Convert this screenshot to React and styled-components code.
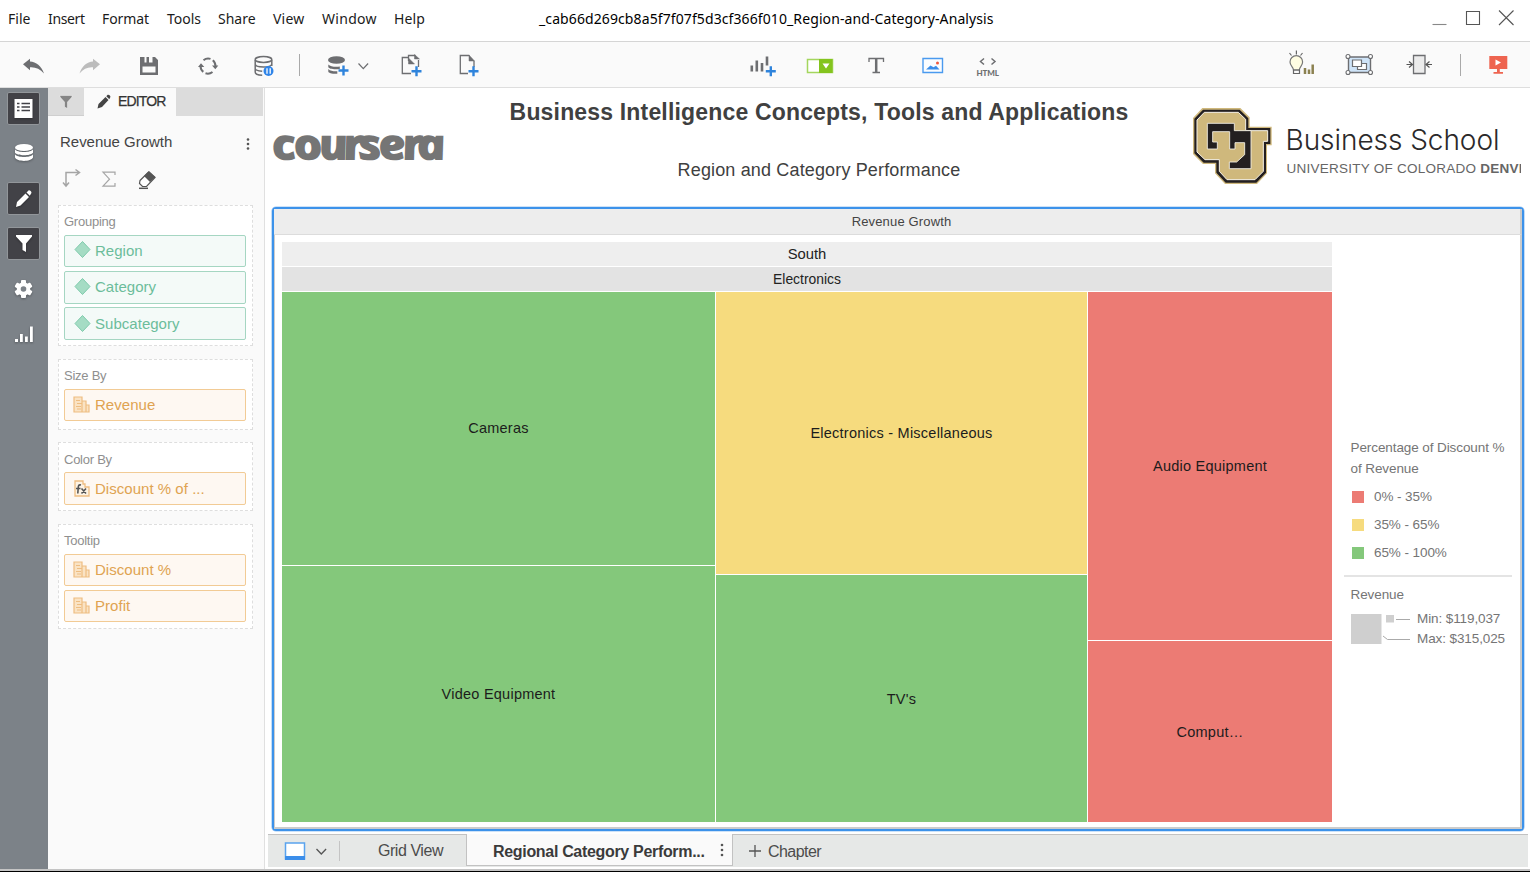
import React from "react";
import styled, { createGlobalStyle } from "styled-components";

const Global = createGlobalStyle`
  * { box-sizing: border-box; }
  body { margin: 0; background: #fff; overflow: hidden; font-family: "Liberation Sans", Arial, sans-serif; }
  svg { display: block; flex: none; }
`;

const Window = styled.div`
  width: 1530px; height: 872px; display: flex; flex-direction: column; overflow: hidden; background: #fff;
`;

/* ---- menu bar ---- */
const MenuBar = styled.header`
  flex: none; height: 42px; display: flex; align-items: flex-start; border-bottom: 1px solid #d5d5d5;
  font: 14px/20px "Noto Sans", "Open Sans", sans-serif; color: #1b1b1b;
`;
const MenuItem = styled.span`
  flex: none; width: ${(p) => p.$w}px; padding-top: 9px; white-space: nowrap; letter-spacing: ${(p) => p.$ls || 0}px;
`;
const DocTitle = styled.span`
  flex: none; width: 893px; padding-top: 9px; letter-spacing: 0.1px; color: #000; white-space: nowrap;
`;

/* ---- toolbar ---- */
const Toolbar = styled.div`
  flex: none; height: 45px; display: flex; background: #fafafa; box-shadow: 0 1px #dedede; padding-left: 4px; position: relative;
`;
const ToolGroup = styled.div`display: flex; margin-left: ${(p) => p.$gap || 0}px;`;
const Divider = styled.i`
  flex: none; width: 1px; height: 22px; background: #a9a9a9; margin: 12px ${(p) => p.$r}px 0 ${(p) => p.$l}px;
`;
const Tool = ({ x, w = 58, children }) => (
  <svg width={w} height="45" viewBox={`${x} 42 ${w} 45`} fill="none" stroke="#6d6e71" strokeWidth="1.5">{children}</svg>
);
const Plus = ({ x, y }) => <path d={`M${x - 5} ${y}h10M${x} ${y - 5}v10`} stroke="#2f84dc" strokeWidth="2.4" />;

/* ---- body ---- */
const Body = styled.div`flex: none; height: 783px; display: flex;`;
const Rail = styled.nav`
  flex: none; width: 48px; background: #7c8288; padding: 5px 0 0 7px; display: flex; flex-direction: column; gap: 12px;
`;
const RailButton = styled.div`
  width: 33px; height: 33px; border-radius: 2px; border: 1px solid ${(p) => (p.$on ? "#92969a" : "transparent")};
  background: ${(p) => (p.$on ? "#424247" : "transparent")};
  svg { margin: -1.5px; filter: drop-shadow(0 1.5px 1px rgba(0,0,0,.3)); }
`;
const RailIcon = ({ on, children }) => (
  <RailButton $on={on}><svg width="34" height="34" viewBox="0 0 34 34" fill="#fff">{children}</svg></RailButton>
);

const Editor = styled.aside`
  flex: none; width: 217px; background: #fafafa; border-right: 1px solid #e0e0e0; padding-right: 1px;
`;
const EditorTabs = styled.div`display: flex; height: 29px; background: #dcdcdc;`;
const FilterTab = styled.div`width: 36px; border-bottom: 1px solid #cfcfcf;`;
const EditorTab = styled.div`
  width: 92px; background: #fafafa; display: flex; font-size: 14px; line-height: 28px; color: #333; -webkit-text-stroke: .25px #333;
  span { letter-spacing: -0.85px; padding-left: 1px; }
`;
const EditorTitle = styled.div`
  display: flex; justify-content: space-between; height: 51px; padding: 16px 13px 0 12px; font-size: 15px; line-height: 20px; color: #444; letter-spacing: -.02px;
`;
const EditorTools = styled.div`height: 38px;`;
const Section = styled.section`
  width: 195px; height: ${(p) => p.$h}px; margin: 0 0 ${(p) => p.$mb}px 10px; padding: 0 6px 0 5px;
  border: 1px dashed #dedede; background: #fff; display: flex; flex-direction: column; gap: 4px;
  h4 { margin: 0; flex: none; height: ${(p) => p.$head}px; margin-bottom: -4px; padding-top: ${(p) => p.$top || 8}px;
    font: 13px/16px "Liberation Sans", Arial, sans-serif; color: #8f8f8f; letter-spacing: -.25px; }
`;
const Pill = styled.div`
  flex: none; height: ${(p) => p.$h || 32}px; width: 182px; border-radius: 2px; display: flex; align-items: center; font-size: 15px;
  border: 1px solid ${(p) => (p.$green ? "#a5d6c2" : "#f2cb95")};
  background: ${(p) => (p.$green ? "#f4faf8" : "#fef8f2")};
  color: ${(p) => (p.$green ? "#6cbd9b" : "#e0a351")};
  letter-spacing: .03px; padding: 0 0 ${(p) => (p.$pb ?? 2)}px 8px; gap: 4px;
`;
const Diamond = () => (
  <svg width="18" height="20" viewBox="0 0 18 20"><path d="M9.5 1.5 17 9.5 9.5 17.5 2 9.5Z" fill="#a5dcc4" stroke="#7fcbac" /></svg>
);
const Building = () => (
  <svg width="18" height="20" viewBox="0 -1 18 20" fill="#fae3c4" stroke="#eebd81" strokeWidth="1.2">
    <path d="M1 2h8v15H1ZM9 6h4v11H9ZM13 10h3v7h-3Z" /><path d="M3 5.5h4M4 8.5h5M3 11.5h5M4 14h4" />
  </svg>
);
const Formula = () => (
  <svg width="18" height="20" viewBox="0 0 18 20" fill="#fdf3e4" stroke="#eebd81" strokeWidth="1.3">
    <path d="M2 2h8v3h2v3h4v9H2Z" />
    <path d="M8 6C5.5 5.3 5.3 7 5.2 9L4.8 14.5M3 9.5h4.5M8.5 9.5l4.5 5M13 9.5l-4.5 5" fill="none" stroke="#555" strokeWidth="1.6" />
  </svg>
);

/* ---- dashboard ---- */
const Main = styled.main`flex: none; width: 1265px; display: flex; flex-direction: column; padding-left: 3px;`;
const Heading = styled.div`flex: none; height: 120px; display: flex;`;
const Coursera = styled.div`flex: none; width: 205px; padding: 36.5px 0 0 5px; svg { overflow: visible; }`;
const Titles = styled.div`
  width: 692px; text-align: center; color: #404040; display: flex; flex-direction: column; align-items: center;
  h1 { margin: 12px 0 0; font-size: 23px; line-height: 26px; letter-spacing: .17px; white-space: nowrap; }
  p { margin: 35px 0 0; font-size: 18px; line-height: 20px; letter-spacing: .15px; }
`;
const School = styled.div`width: 356px; display: flex; padding: 19.500px 0 0 26.500px; overflow: hidden;`;
const SchoolName = styled.div`
  width: 236px; overflow: hidden; margin-left: 13px; padding-top: 15px; white-space: nowrap; color: #2b292a;
  div { font: 28px/37px Inter, "Liberation Sans", sans-serif; font-weight: 300; letter-spacing: -.05px; }
  p { margin: 0; font-size: 13.5px; line-height: 20px; color: #666; letter-spacing: .25px; padding-left: 1px; }
`;
const Panel = styled.section`
  flex: none; width: 1252px; height: 624px; margin-left: 4px; border: 2px solid #3c92ea; border-radius: 4px;
  box-shadow: 0 0 0 .6px #9cc6f2; display: flex; flex-direction: column;
`;
const PanelHead = styled.div`
  flex: none; height: 26px; background: #ededed; border-bottom: 1px solid #dcdcdc; border-right: 2px solid #ccc;
  text-align: center; font-size: 13px; line-height: 25px; color: #444; letter-spacing: .15px; padding-left: 9px;
`;
const PanelBody = styled.div`
  flex: 1; border: solid #ccc; border-width: 0 2px 2px 1px; display: flex; padding: 7px 0 5px 7px;
`;
const Treemap = styled.div`width: 1050px; display: flex; flex-direction: column; gap: 1px;`;
const Band = styled.div`
  flex: none; height: 24px; background: ${(p) => p.$bg}; text-align: center; font-size: ${(p) => p.$fs}px; line-height: 24px; color: #222;
`;
const Columns = styled.div`flex: 1; display: flex; gap: 1px;`;
const Column = styled.div`width: ${(p) => p.$w}px; display: flex; flex-direction: column; gap: 1px;`;
const tones = { red: "#ec7b74", yellow: "#f6db7e", green: "#84c87b" };
const Tile = styled.div`
  height: ${(p) => p.$h}px; background: ${(p) => tones[p.$tone]}; display: flex; align-items: center; justify-content: center;
  font-size: 14.5px; color: #1c1c1c; letter-spacing: .24px; padding: 0 0 ${(p) => p.$lift || 0}px 0;
`;
const Legend = styled.div`
  width: 168px; margin: 195px 0 0 12px; color: #757575; font-size: 13.5px; line-height: 21px;
  p { margin: 0; padding-left: 6.500px; letter-spacing: -.09px; white-space: nowrap; }
`;
const Key = styled.div`
  display: flex; align-items: center; height: 28px; padding-left: 8px; gap: 10px; letter-spacing: -.08px;
  i { width: 12px; height: 12px; background: ${(p) => tones[p.$tone]}; margin-top: 1px; }
`;
const LegendRule = styled.div`height: 2px; background: #e4e4e4; margin: 9px 0 7px;`;
const SizeKey = styled.div`
  display: flex; padding-left: 7px; margin-top: 3px; line-height: 20px; gap: 6px; white-space: nowrap; letter-spacing: -.1px;
  div { padding-top: 1px; }
`;

/* ---- chapter tabs ---- */
const Tabs = styled.footer`
  flex: none; width: 1260px; height: 33px; margin-top: 3px; background: #e6e8e7; border-top: 1px solid #c2c2c2; display: flex;
  font-size: 16px; line-height: 34px; color: #4c4c4c; white-space: nowrap;
`;
const GridTab = styled.div`width: 126px; padding-left: 38px; line-height: 32px; letter-spacing: -.45px;`;
const ActiveTab = styled.div`
  width: 267px; height: 32px; margin-top: -1px; background: #fafafa; border: 1px solid #c2c2c2; border-top: 0; display: flex; justify-content: space-between;
  padding: 0 8px 0 26px; font-weight: bold; line-height: 35px; color: #3b3b3b; letter-spacing: -.32px;
`;
const NewTab = styled.div`display: flex; gap: 7px; padding-left: 16px; letter-spacing: -.55px;`;
const BottomEdge = styled.div`flex: none; height: 3px; border-top: 1px solid #c4c4c4; border-bottom: 1px solid #000; background: #c4c4c4; margin-top: -1px;`;

const Dots = ({ h = 20, y = 10, s = 4.5 }) => (
  <svg width="4" height={h} viewBox={`0 0 4 ${h}`} fill="#555">
    {[-s, 0, s].map((d) => <circle key={d} cx="2" cy={y + d} r="1.3" />)}
  </svg>
);

const silhouette = "M68 70H182L210 98V126H276V182H262V266L232 298H136L106 266V238H70L40 208V100Z";
const CUMark = () => (
  <svg width="81" height="79" viewBox="37 67 243 237" strokeLinejoin="miter">
    <path d={silhouette} fill="#cfb87c" />
    <path d="M70 75H180L206 101V130H272V178H259V264L230 294H138L110 264V234H72L44 206V102Z" fill="#231f20" />
    <path d="M74 83H176L198 104V138H264V170H251V260L226 285H142L119 260V225H76L52 202V106Z" fill="#cfb87c" stroke="#f6f2e8" strokeWidth="3" />
    <path d="M83 116H164V138H214V252H149V232H171L195 210V174H166V193H150V141H99V172H113V193H83Z" fill="#231f20" stroke="#f6f2e8" strokeWidth="2.600" />
  </svg>
);

export default function App() {
  return (
    <Window>
      <Global />
      <MenuBar>
        <MenuItem $w={8} />
        <MenuItem $w={40} $ls={0}>File</MenuItem>
        <MenuItem $w={54} $ls={-0.35}>Insert</MenuItem>
        <MenuItem $w={65} $ls={-0.1}>Format</MenuItem>
        <MenuItem $w={51} $ls={0}>Tools</MenuItem>
        <MenuItem $w={55} $ls={0}>Share</MenuItem>
        <MenuItem $w={49} $ls={0.2}>View</MenuItem>
        <MenuItem $w={72} $ls={0.3}>Window</MenuItem>
        <MenuItem $w={145} $ls={0.15}>Help</MenuItem>
        <DocTitle>_cab66d269cb8a5f7f07f5d3cf366f010_Region-and-Category-Analysis</DocTitle>
        <svg width="90" height="41" viewBox="1432 0 90 41" fill="none" stroke="#555" strokeWidth="1.1">
          <path d="M1432.5 24.5h14" stroke="#888" /><path d="M1466.5 11.5h13v13h-13Z" /><path d="m1499 10.5 14.5 14.5m0-14.5L1499 25" />
        </svg>
      </MenuBar>

      <Toolbar>
        <ToolGroup>
          <Tool x={4}><path stroke="none" fill="#6d6e71" d="M23 64.2 30 58.8v2.8c6 .3 11.5 4.500 14 11.900-4-4.600-8.500-6.600-14-6.200v2.900Z" /></Tool>
          <Tool x={62}><path stroke="none" fill="#bcbcbc" d="M100 64.200 93 58.800v2.800c-6 .3-11 4.500-13.500 11.900 4-4.600 8-6.600 13.500-6.200v2.900Z" /></Tool>
          <Tool x={120}><path stroke="none" fill="#6d6e71" fillRule="evenodd" d="M140 57h15l3 3v15h-18ZM142.500 66.500v6h13v-6ZM144.500 57v5.500h2V57ZM149 57v5.500h3.500V57Z" /></Tool>
          <Tool x={178}>
            <path d="M203.500 60.200a7.500 7.500 0 0 1 7-1.300M212.800 60.200a7.500 7.500 0 0 1 2.700 5.800M212.500 72a7.500 7.500 0 0 1-7 1.300M203.300 71.900a7.500 7.500 0 0 1-2.800-5.900" strokeWidth="2" />
            <path d="M198 67 201 63.200 204.300 67ZM212 65.500h6.300L215.300 69.200Z" fill="#6d6e71" stroke="none" />
          </Tool>
          <Tool x={236}>
            <ellipse cx="263.500" cy="59.500" rx="8.300" ry="2.900" />
            <path d="M255.200 60v12c0 2 3 3.200 7 3.300M271.800 60v6M255.200 64c0 2 4 3 8.300 3s8-1 8.300-3M255.200 68.500c0 1.700 3 2.500 7 2.800" />
            <circle cx="268.500" cy="71" r="5" fill="#2f84e8" stroke="none" /><path d="M267 68.300v5.500M270.200 68.300v5.500" stroke="#fff" strokeWidth="1.300" />
          </Tool>
        </ToolGroup>
        <Divider $l={5} $r={16} />
        <Tool x={316} w={40}>
          <g fill="#6d6e71" stroke="none"><ellipse cx="336.500" cy="60" rx="8.500" ry="3.800" />
            <path d="M328.300 64.500c2 2.500 8 2.500 11.500 2v2.500c-6 .8-11-.2-11.500-2ZM328.300 69c2 2.300 6 2.300 9 2.200v2.600c-5 .2-9-.8-9-2.300Z" /></g>
          <Plus x={343.500} y={70.500} />
        </Tool>
        <Tool x={356} w={26}><path d="m358.500 63.500 4.800 5.200 4.800-5.200" strokeWidth="1.200" /></Tool>
        <Tool x={382}>
          <path d="M411 73.500h-8.700V57.500h6.500M408.500 61V55.500h7M418.500 60v7" strokeWidth="1.300" />
          <path d="M414.500 54.500v4.500h5ZM408.500 58v6h6Z" fill="#6d6e71" stroke="#6d6e71" strokeWidth=".5" /><Plus x={416.500} y={71.300} />
        </Tool>
        <Tool x={440}>
          <path d="M468 73.500h-7.700v-18h9M474 61v6" strokeWidth="1.300" />
          <path d="M469 55v6h5.500Z" fill="#6d6e71" strokeWidth=".5" /><Plus x={473.500} y={71.300} />
        </Tool>
        <ToolGroup $gap={235}>
          <Tool x={733}>
            <path d="M751.800 65.500v6M756.800 60.500v11M762 63v8.500M767 56.500v9" strokeWidth="2.600" /><Plus x={770.800} y={71.300} />
          </Tool>
          <Tool x={791}>
            <path d="M807.500 59.500h25v13h-25Z" fill="#fff" stroke="#a4d65e" /><path d="M819 59h13.500v14H819Z" fill="#84c41e" stroke="none" />
            <path d="M822.500 63.500h7l-3.500 5Z" fill="#fff" stroke="none" />
          </Tool>
          <Tool x={849} w={56}><path d="M869 62v-3.500h14.500V62M872.500 72.500h7.500" strokeWidth="1.300" /><path d="M876.200 58v14" strokeWidth="2.500" /></Tool>
          <Tool x={905} w={56}>
            <path d="M923 58.500h19.500v14H923Z" stroke="#4a9aef" strokeWidth="1.400" fill="#fbfdff" />
            <path d="m926 69.500 4.500-4 3 1.800 2.500-1.500 3.500 3.700Z" fill="#3b8eea" stroke="none" /><circle cx="937.500" cy="63" r="1.500" fill="#f05a40" stroke="none" />
          </Tool>
          <Tool x={961}>
            <path d="m984 58.500-3.500 3 3.500 3M991.500 58.500l3.500 3-3.500 3" strokeWidth="1.500" />
            <text x="976.500" y="75.500" textLength="22.500" fontFamily="Lato, sans-serif" fontSize="8" fontWeight="900" fill="#6d6e71" stroke="none">HTML</text>
          </Tool>
        </ToolGroup>
        <ToolGroup $gap={253}>
          <Tool x={1272}>
            <path d="M1293.500 70c0-3-3.500-4-3.500-8a6.300 6.300 0 0 1 12.600 0c0 4-3.300 5-3.300 8Z" fill="#fffde2" stroke="#777" strokeWidth="1.200" />
            <path d="M1293.500 70h6v3.500h-6ZM1296.400 50.500v4M1289.500 53l2 2.500M1302.500 53l-2 2.500" stroke="#666" strokeWidth="1.200" />
            <path d="M1305 68v6M1309 69.500v4.500M1312.700 64.500v9.500" stroke="#8b8150" strokeWidth="2.500" />
          </Tool>
          <Tool x={1330} w={60}>
            <path d="M1348.500 57h22v15.500h-22Z" fill="#cfe4f8" strokeWidth="1.400" />
            <path d="M1357.500 63.500h9v6h-9Z" fill="#fff" strokeWidth="1.200" />
            <path d="M1352.500 60h9v6.500h-9Z" fill="#fff" strokeWidth="1.200" />
            {[[1348, 56.500], [1370.500, 56.500], [1348, 72.500], [1370.500, 72.500]].map(([a, b]) => <circle key={`${a}${b}`} cx={a} cy={b} r="2" fill="#fff" strokeWidth="1.100" />)}
          </Tool>
          <Tool x={1390}>
            <path d="M1413.500 55.500h11.500v18h-11.500Z" fill="#ececec" strokeWidth="1.300" />
            <path d="M1406.500 64.500h6M1409 61.500l3.500 3-3.500 3M1432 64.500h-6M1429.500 61.500l-3.500 3 3.500 3" stroke="#555" strokeWidth="1.200" />
          </Tool>
        </ToolGroup>
        <Divider $l={12} $r={8} />
        <Tool x={1469}>
          <path d="M1489.300 56h18v13h-18ZM1497 69h2.800v3h3.200v1.800h-9.500V72h3.500Z" fill="#ee6450" stroke="none" />
          <path d="m1495.500 59.500 5.500 3-5.500 3Z" fill="#fff" stroke="none" />
        </Tool>
      </Toolbar>

      <Body>
        <Rail>
          <RailIcon on>
            <path d="M7.500 7h18v19h-18Z" />
            <path d="M10 11.500h2.500M10 15h2.500M10 18.500h2.500M14.500 11.500h8.500M14.500 15h8.500M14.500 18.500h8.500" stroke="#424247" strokeWidth="1.300" />
          </RailIcon>
          <RailIcon>
            <ellipse cx="17" cy="10.500" rx="9" ry="3.600" />
            <path d="M8 12.300c2 3.700 16 3.700 18 0v3.500c-2 3.300-16 3.300-18 0ZM8 17.300c2 3.700 16 3.700 18 0v3.300c-2 4.500-16 4.500-18 0Z" />
          </RailIcon>
          <RailIcon on><path d="M9 25 10 20 18.500 11.500 22 15 13.500 23.500ZM19.500 10.500 21.500 8.500c1-1 3.700 1.500 2.800 2.700L22.800 13.800Z" /></RailIcon>
          <RailIcon on><path d="M9 8h16v1.500L19 16.500V25l-3.500-2V16.500L9 9.500Z" /></RailIcon>
          <RailIcon>
            <g transform="translate(16.500 17)">
              {[0, 60, 120].map((a) => <rect key={a} x="-2.500" y="-9" width="5" height="18" rx="1" transform={`rotate(${a})`} />)}
              <circle r="6.800" /><circle r="2.800" fill="#7c8288" />
            </g>
          </RailIcon>
          <RailIcon><path d="M8 22h3v3H8ZM13 17h2.800v8H13ZM18 19.500h2.800V25H18ZM23 9.500h2.800V25H23Z" /></RailIcon>
        </Rail>

        <Editor>
          <EditorTabs>
            <FilterTab><svg width="36" height="28" viewBox="0 0 36 28"><path d="M12 8.500h12v1.500l-4.500 5v6.500l-3-1.500V15L12 10Z" fill="#858585" stroke="#f2f2f2" strokeWidth=".5" /></svg></FilterTab>
            <EditorTab>
              <svg width="33" height="28" viewBox="0 0 33 28" fill="#444"><path d="M13.500 21.500 14.500 17 21.500 10 24.500 13 18 20ZM22.300 9.200 23.700 7.800c1-.7 3.200 1.200 2.700 2.300L25.300 12.200Z" /></svg>
              <span>EDITOR</span>
            </EditorTab>
          </EditorTabs>
          <EditorTitle><span>Revenue Growth</span><Dots h={22} y={12} /></EditorTitle>
          <EditorTools>
            <svg width="120" height="30" viewBox="48 167 120 30" fill="none" stroke="#a5a5a5" strokeWidth="1.500">
              <path d="M66 185v-12.500h13M75.500 169.500l4 3-4 3M63 182.500l3 3.500 3-3.500" />
              <path d="M115 175v-2.800h-12l6.500 7-6.500 7h12V183" strokeWidth="1.200" />
              <path d="m140 180.500 8.500-8.500 6.500 5.500-8.500 9h-4l-3-3Z" fill="#fff" stroke="#555" strokeWidth="1.200" /><path d="m144 176 5-5 6.500 6-5.500 5Z" fill="#555" stroke="none" /><path d="M139 188.300h9" stroke="#555" />
            </svg>
          </EditorTools>
          <Section $h={141} $mb={13} $head={29}>
            <h4>Grouping</h4>
            <Pill $green><Diamond />Region</Pill>
            <Pill $green $h={33}><Diamond />Category</Pill>
            <Pill $green $h={33} $pb={0} style={{ marginTop: -1 }}><Diamond />Subcategory</Pill>
          </Section>
          <Section $h={71} $mb={12} $head={29}>
            <h4>Size By</h4><Pill><Building />Revenue</Pill>
          </Section>
          <Section $h={69} $mb={13} $head={29} $top={9}>
            <h4>Color By</h4><Pill $h={33} $pb={0}><Formula />Discount % of ...</Pill>
          </Section>
          <Section $h={105} $mb={0} $head={29}>
            <h4>Tooltip</h4><Pill><Building />Discount %</Pill><Pill><Building />Profit</Pill>
          </Section>
        </Editor>

        <Main>
          <Heading>
            <Coursera>
              <svg width="190" height="60" viewBox="0 0 190 60">
                <text transform="translate(1.500 34.500) skewX(12) scale(1.160 1)" x="0 19 40.500 61.500 74.500 92 112.500 125" fontFamily="'Open Sans', sans-serif" fontWeight="700" fontStyle="italic" fontSize="41" fill="#757575" stroke="#757575" strokeWidth="1.900">coursera</text>
              </svg>
            </Coursera>
            <Titles>
              <h1>Business Intelligence Concepts, Tools and Applications</h1>
              <p>Region and Category Performance</p>
            </Titles>
            <School>
              <CUMark />
              <SchoolName>
                <div>Business School</div>
                <p>UNIVERSITY OF COLORADO <b>DENVER</b></p>
              </SchoolName>
            </School>
          </Heading>
          <Panel>
            <PanelHead>Revenue Growth</PanelHead>
            <PanelBody>
              <Treemap>
                <Band $bg="#eeeeee" $fs={14.800}>South</Band>
                <Band $bg="#e3e3e3" $fs={13.900}>Electronics</Band>
                <Columns>
                  <Column $w={433}>
                    <Tile $tone="green" $h={273} $lift={2}>Cameras</Tile>
                    <Tile $tone="green" $h={256}>Video Equipment</Tile>
                  </Column>
                  <Column $w={371}>
                    <Tile $tone="yellow" $h={282}>Electronics - Miscellaneous</Tile>
                    <Tile $tone="green" $h={247}>TV's</Tile>
                  </Column>
                  <Column $w={244}>
                    <Tile $tone="red" $h={348}>Audio Equipment</Tile>
                    <Tile $tone="red" $h={181}>Comput…</Tile>
                  </Column>
                </Columns>
              </Treemap>
              <Legend>
                <p>Percentage of Discount %</p>
                <p>of Revenue</p>
                <Key $tone="red" style={{ marginTop: 3 }}><i />0% - 35%</Key>
                <Key $tone="yellow"><i />35% - 65%</Key>
                <Key $tone="green"><i />65% - 100%</Key>
                <LegendRule />
                <p>Revenue</p>
                <SizeKey>
                  <svg width="60" height="40" viewBox="1351 608 60 40"><path d="M1351 614h30.500v30H1351ZM1386 615h8v7.500h-8Z" fill="#cfcfcf" /><path d="M1396 619.500h14M1383 636l4.500 3.500H1410" stroke="#aaa" fill="none" /></svg>
                  <div>Min: $119,037<br />Max: $315,025</div>
                </SizeKey>
              </Legend>
            </PanelBody>
          </Panel>
          <Tabs>
            <svg width="72" height="32" viewBox="268 835 72 32" fill="none">
              <path d="M285.500 843h19v16h-19Z" fill="#fff" stroke="#5aa3ee" strokeWidth="1.500" /><path d="M285 856h20v4h-20Z" fill="#3b8eea" /><path d="m316.500 849 4.800 5 4.800-5" stroke="#555" strokeWidth="1.300" /><path d="M339.500 841v20" stroke="#c4c4c4" />
            </svg>
            <GridTab>Grid View</GridTab>
            <ActiveTab><span>Regional Category Perform...</span><Dots h={32} y={16} s={5} /></ActiveTab>
            <NewTab>
              <svg width="12" height="32" viewBox="0 0 12 32"><path d="M6 10v12M0 16h12" stroke="#555" strokeWidth="1.300" /></svg>Chapter
            </NewTab>
          </Tabs>
        </Main>
      </Body>
      <BottomEdge />
    </Window>
  );
}
